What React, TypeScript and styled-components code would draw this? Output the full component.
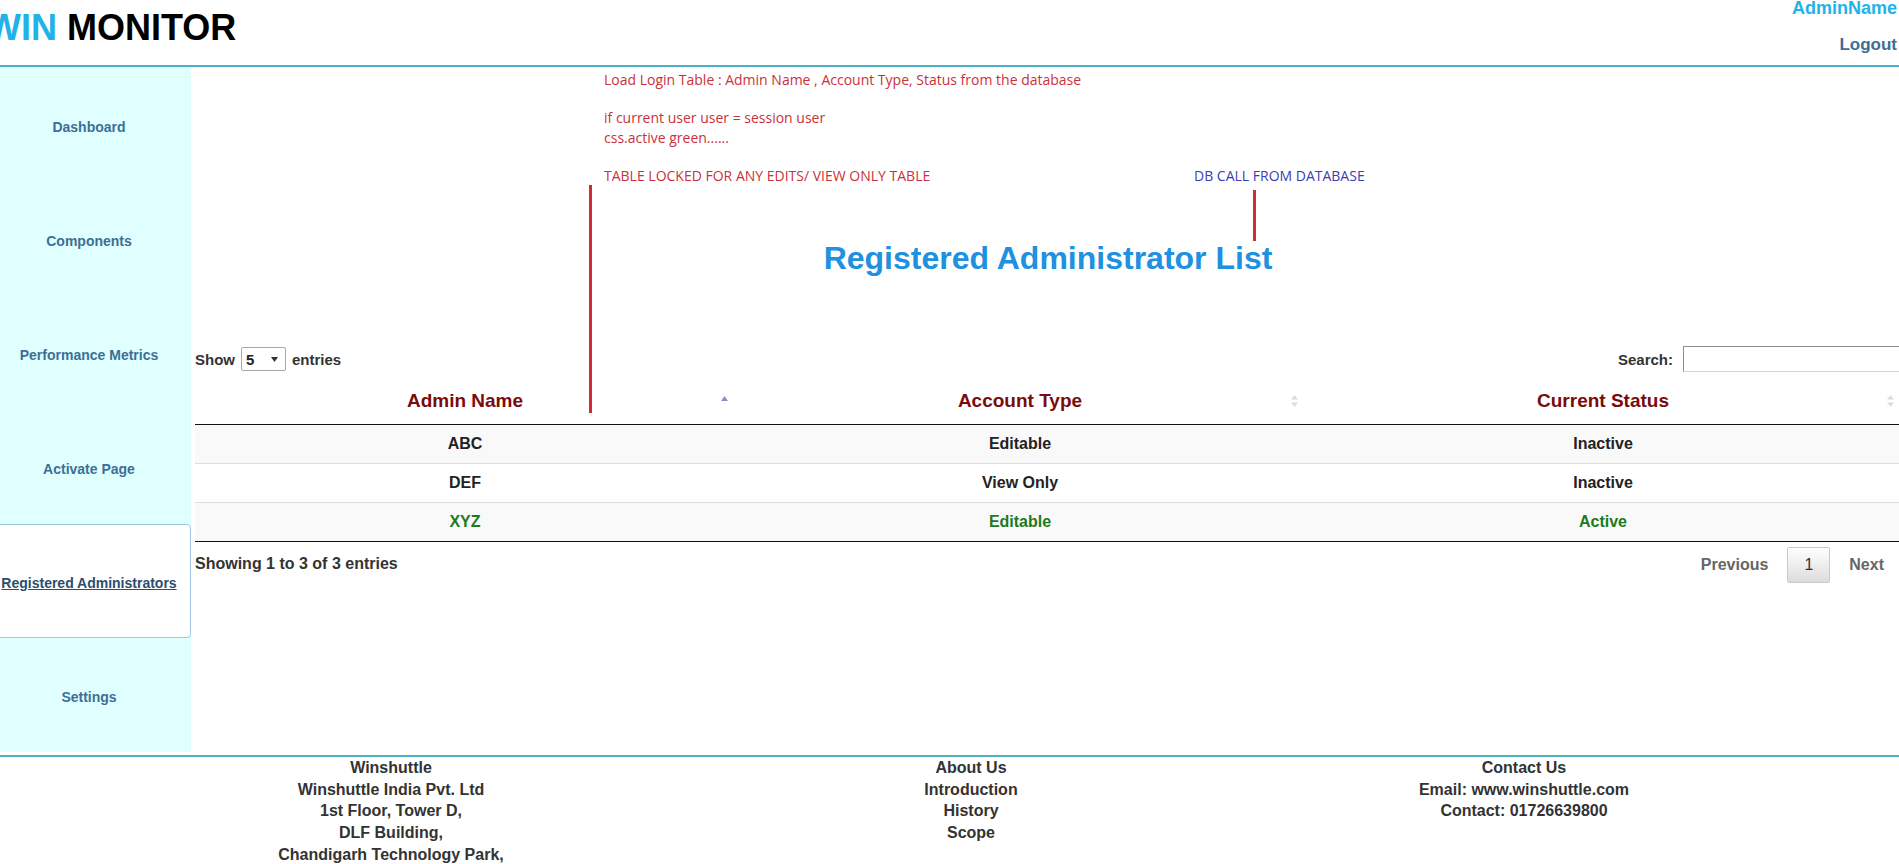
import React from "react";
import styled, { createGlobalStyle } from "styled-components";

const GlobalStyle = createGlobalStyle`
  html, body { margin: 0; padding: 0; background: #fff; overflow: hidden; }
  body { font-family: "Liberation Sans", Arial, sans-serif; color: #333; }
  * { box-sizing: border-box; }
`;

const Page = styled.div`
  width: 1914px;
  margin-left: -13px;
`;

const Header = styled.header`
  height: 67px;
  border-bottom: 2px solid #4ab0c6;
  display: flex;
  justify-content: space-between;
  align-items: flex-start;
  padding-right: 4px;
`;

const Logo = styled.h1`
  margin: 0;
  padding-top: 10px;
  font-size: 36px;
  line-height: 36px;
  font-weight: 700;
  color: #000;
`;

const LogoAccent = styled.span`
  color: #1fb3e8;
`;

const UserBox = styled.div`
  display: flex;
  flex-direction: column;
  align-items: flex-end;
`;

const UserName = styled.a`
  font-size: 18px;
  line-height: 17px;
  font-weight: 700;
  color: #1fb3e8;
  text-decoration: none;
`;

const Logout = styled.a`
  margin-top: 19px;
  font-size: 17px;
  line-height: 17px;
  font-weight: 700;
  color: #3d6e96;
  text-decoration: none;
`;

const Body = styled.div`
  display: flex;
  margin-top: 1px;
`;

const Sidebar = styled.nav`
  width: 204px;
  flex: none;
  background: #e0ffff;
  display: flex;
  flex-direction: column;
`;

const NavItem = styled.a<{ $active?: boolean }>`
  height: 114px;
  padding-top: 3px;
  display: flex;
  align-items: center;
  justify-content: center;
  font-size: 14px;
  font-weight: 700;
  color: ${(p) => (p.$active ? "#2b4e70" : "#3c6f98")};
  text-decoration: ${(p) => (p.$active ? "underline" : "none")};
  background: ${(p) => (p.$active ? "#fff" : "transparent")};
  border: 1px solid ${(p) => (p.$active ? "#a3c3e3" : "transparent")};
  border-radius: 4px;
`;

const Main = styled.main`
  position: relative;
  flex: 1;
  padding-left: 4px;
  display: flex;
  flex-direction: column;
`;

const Notes = styled.div`
  padding: 2px 0 0 409px;
  font-family: "Open Sans", "Noto Sans", sans-serif;
  font-size: 14px;
  line-height: 20px;
  color: #c9323b;
`;

const NoteP = styled.p`
  margin: 0;
  & + & {
    margin-top: 18px;
  }
`;

const NoteRow = styled.div`
  margin-top: 18px;
  display: grid;
  grid-template-columns: 590px auto;
`;

const DbNote = styled.span`
  color: #3c3cb4;
`;

const RedLine = styled.span<{ $left: number; $top: number; $height: number }>`
  position: absolute;
  left: ${(p) => p.$left}px;
  top: ${(p) => p.$top}px;
  height: ${(p) => p.$height}px;
  width: 3px;
  background: #d42a35;
`;

const Title = styled.h2`
  margin: 55px 0 0;
  text-align: center;
  font-size: 32px;
  line-height: 34px;
  font-weight: 700;
  color: #2090e0;
`;

const Controls = styled.div`
  margin: 71px 0 6px;
  height: 26px;
  display: flex;
  justify-content: space-between;
  align-items: center;
  font-size: 15px;
  font-weight: 700;
  color: #333;
`;

const Label = styled.label`
  display: flex;
  align-items: center;
  gap: 4px;
`;

const SelectWrap = styled.span`
  position: relative;
  display: inline-flex;
  margin-left: 2px;
  margin-right: 2px;
`;

const Select = styled.select`
  appearance: none;
  -webkit-appearance: none;
  width: 45px;
  height: 24px;
  padding: 0 0 0 4px;
  border: 1px solid #a9a9a9;
  border-radius: 2px;
  background: #fff;
  font-family: "Liberation Sans", Arial, sans-serif;
  font-size: 15px;
  font-weight: 700;
  color: #222;
`;

const SelectArrow = styled.svg`
  position: absolute;
  right: 8px;
  top: 10px;
  pointer-events: none;
`;

const SearchInput = styled.input`
  width: 218px;
  height: 26px;
  margin-left: 6px;
  border: 1px solid;
  border-color: #8f8f8f #d4d4d4 #d4d4d4 #8f8f8f;
  background: #fff;
`;

const Table = styled.table`
  width: 1706px;
  border-collapse: separate;
  border-spacing: 0;
`;

const Th = styled.th<{ $w: number }>`
  position: relative;
  width: ${(p) => p.$w}px;
  padding: 12px 18px;
  font-size: 19px;
  line-height: 22px;
  font-weight: 700;
  color: #7a0b0b;
  text-align: center;
  border-bottom: 1px solid #111;
`;

const SortIcon = styled.svg`
  position: absolute;
  right: 7px;
  top: 50%;
  transform: translateY(-50%);
`;

const Tr = styled.tr`
  &:nth-child(odd) td {
    background: #f9f9f9;
  }
  & + & td {
    border-top: 1px solid #ddd;
  }
  &:last-child td {
    border-bottom: 1px solid #111;
  }
`;

const Td = styled.td<{ $current?: boolean }>`
  padding: 8px 10px;
  font-size: 16px;
  line-height: 22px;
  font-weight: 700;
  text-align: center;
  color: ${(p) => (p.$current ? "#1d7a1d" : "#222")};
`;

const TableFooter = styled.div`
  width: 1706px;
  padding-top: 5px;
  display: flex;
  justify-content: space-between;
  align-items: center;
  font-size: 16px;
  font-weight: 700;
  color: #333;
`;

const Info = styled.div`
  margin-top: -3px;
`;

const Pager = styled.div`
  display: flex;
  gap: 2px;
`;

const PageButton = styled.a<{ $current?: boolean }>`
  min-width: 24px;
  padding: 8px 16px;
  font-size: 16px;
  line-height: 18px;
  text-align: center;
  border-radius: 2px;
  border: 1px solid ${(p) => (p.$current ? "#cacaca" : "transparent")};
  background: ${(p) =>
    p.$current ? "linear-gradient(to bottom, #fff 0%, #dcdcdc 100%)" : "transparent"};
  color: ${(p) => (p.$current ? "#333" : "#666")};
  font-weight: ${(p) => (p.$current ? 400 : 700)};
`;

const Footer = styled.footer`
  margin-top: 3px;
  border-top: 2px solid #4ab0c6;
  display: grid;
  grid-template-columns: 808px 352px 1fr;
  font-size: 16px;
  line-height: 21.7px;
  font-weight: 700;
  color: #333;
  text-align: center;
`;

const FooterCol = styled.div`
  display: flex;
  flex-direction: column;
`;

const SortBoth = () => (
  <SortIcon width="7" height="12" viewBox="0 0 7 12">
    <path d="M3.5 0 L7 4.5 L0 4.5 Z" fill="#dcdcdc" />
    <path d="M0 7.5 L7 7.5 L3.5 12 Z" fill="#dcdcdc" />
  </SortIcon>
);

const SortAsc = () => (
  <SortIcon width="7" height="12" viewBox="0 0 7 12">
    <path d="M3.5 1 L7 6 L0 6 Z" fill="#8b8bd6" />
  </SortIcon>
);

const navItems = [
  "Dashboard",
  "Components",
  "Performance Metrics",
  "Activate Page",
  "Registered Administrators",
  "Settings",
];

const rows = [
  { name: "ABC", type: "Editable", status: "Inactive", current: false },
  { name: "DEF", type: "View Only", status: "Inactive", current: false },
  { name: "XYZ", type: "Editable", status: "Active", current: true },
];

export default function App() {
  return (
    <>
      <GlobalStyle />
      <Page>
        <Header>
          <Logo>
            <LogoAccent>WIN</LogoAccent> MONITOR
          </Logo>
          <UserBox>
            <UserName>AdminName</UserName>
            <Logout>Logout</Logout>
          </UserBox>
        </Header>
        <Body>
          <Sidebar>
            {navItems.map((n) => (
              <NavItem key={n} $active={n === "Registered Administrators"}>
                {n}
              </NavItem>
            ))}
          </Sidebar>
          <Main>
            <Notes>
              <NoteP>Load Login Table : Admin Name , Account Type, Status from the database</NoteP>
              <NoteP>
                if current user user = session user
                <br />
                css.active green......
              </NoteP>
              <NoteRow>
                <span>TABLE LOCKED FOR ANY EDITS/ VIEW ONLY TABLE</span>
                <DbNote>DB CALL FROM DATABASE</DbNote>
              </NoteRow>
            </Notes>
            <RedLine $left={398} $top={117} $height={228} />
            <RedLine $left={1062} $top={122} $height={51} />
            <Title>Registered Administrator List</Title>
            <Controls>
              <Label>
                Show
                <SelectWrap>
                  <Select defaultValue="5">
                    <option value="5">5</option>
                    <option value="10">10</option>
                  </Select>
                  <SelectArrow width="7" height="5" viewBox="0 0 7 5">
                    <path d="M0 0 L7 0 L3.5 5 Z" fill="#333" />
                  </SelectArrow>
                </SelectWrap>
                entries
              </Label>
              <Label>
                Search:
                <SearchInput type="search" />
              </Label>
            </Controls>
            <Table>
              <thead>
                <tr>
                  <Th $w={540}>
                    Admin Name
                    <SortAsc />
                  </Th>
                  <Th $w={570}>
                    Account Type
                    <SortBoth />
                  </Th>
                  <Th $w={596}>
                    Current Status
                    <SortBoth />
                  </Th>
                </tr>
              </thead>
              <tbody>
                {rows.map((r) => (
                  <Tr key={r.name}>
                    <Td $current={r.current}>{r.name}</Td>
                    <Td $current={r.current}>{r.type}</Td>
                    <Td $current={r.current}>{r.status}</Td>
                  </Tr>
                ))}
              </tbody>
            </Table>
            <TableFooter>
              <Info>Showing 1 to 3 of 3 entries</Info>
              <Pager>
                <PageButton>Previous</PageButton>
                <PageButton $current>1</PageButton>
                <PageButton>Next</PageButton>
              </Pager>
            </TableFooter>
          </Main>
        </Body>
        <Footer>
          <FooterCol>
            <span>Winshuttle</span>
            <span>Winshuttle India Pvt. Ltd</span>
            <span>1st Floor, Tower D,</span>
            <span>DLF Building,</span>
            <span>Chandigarh Technology Park,</span>
          </FooterCol>
          <FooterCol>
            <span>About Us</span>
            <span>Introduction</span>
            <span>History</span>
            <span>Scope</span>
          </FooterCol>
          <FooterCol>
            <span>Contact Us</span>
            <span>Email: www.winshuttle.com</span>
            <span>Contact: 01726639800</span>
          </FooterCol>
        </Footer>
      </Page>
    </>
  );
}
